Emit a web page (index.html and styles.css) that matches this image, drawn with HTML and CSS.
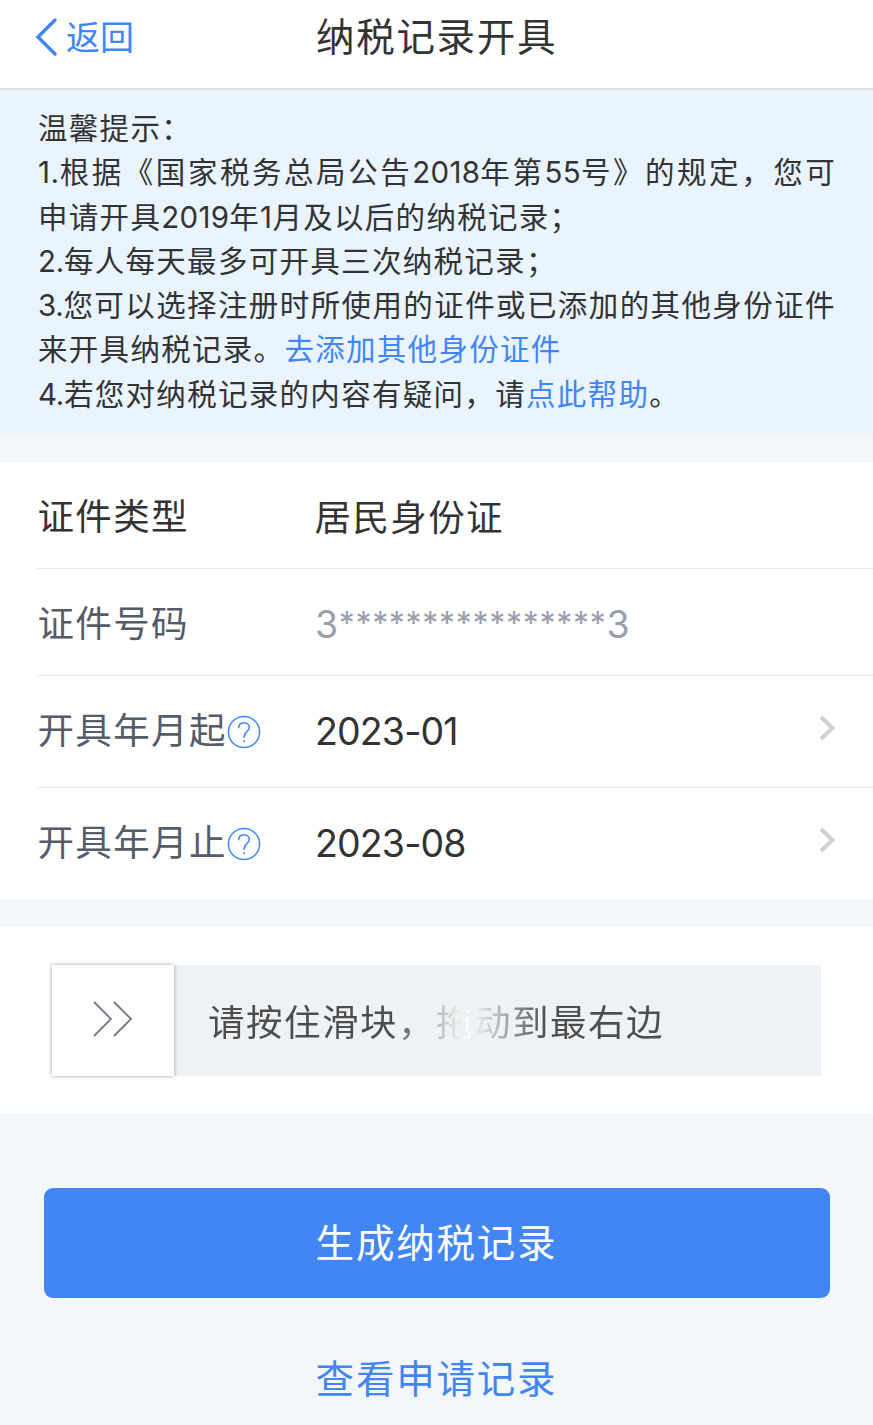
FILE: index.html
```html
<!DOCTYPE html>
<html lang="zh-CN">
<head>
<meta charset="utf-8">
<title>纳税记录开具</title>
<link rel="stylesheet" href="styles.css">
</head>
<body>
<header class="navbar">
  <a class="back"><svg class="back-icon" width="24" height="40" viewBox="0 0 24 40"><path d="M20 3L3 20L20 37" fill="none" stroke="currentColor" stroke-width="3.400" stroke-linecap="round" stroke-linejoin="miter"/></svg><span>返回</span></a>
  <h1 class="title">纳税记录开具</h1>
</header>
<section class="tips">
  <p class="tip">温馨提示：</p>
  <p class="tip tip-wide"><span class="index">1.</span>根据《国家税务总局公告<span class="num">2018</span>年第<span class="num">55</span>号》的规定，您可</p>
  <p class="tip">申请开具<span class="num">2019</span>年<span class="num">1</span>月及以后的纳税记录；</p>
  <p class="tip"><span class="index">2.</span>每人每天最多可开具三次纳税记录；</p>
  <p class="tip tip-full"><span class="index">3.</span>您可以选择注册时所使用的证件或已添加的其他身份证件</p>
  <p class="tip">来开具纳税记录。<a class="link">去添加其他身份证件</a></p>
  <p class="tip"><span class="index">4.</span>若您对纳税记录的内容有疑问，请<a class="link">点此帮助</a>。</p>
</section>
<section class="form">
  <div class="row"><span class="label dark">证件类型</span><span class="value">居民身份证</span></div>
  <div class="row"><span class="label">证件号码</span><span class="value masked">3<span class="stars">****************</span>3</span></div>
  <div class="row tall">
    <span class="label">开具年月起<svg class="help" width="34" height="34" viewBox="0 0 34 34"><circle cx="17" cy="17" r="15.600"/><path d="M11.600 13.200C11.600 9.800 13.700 7.700 17 7.700S22.300 9.900 22.300 12.600C22.300 16.400 17.200 17 17.200 21.500V22.700"/><path d="M17.200 25.200V27.200"/></svg></span>
    <span class="value date">2023-01</span>
    <svg class="chevron" width="18" height="28" viewBox="0 0 18 28"><path d="M3 3L14.500 14L3 25"/></svg>
  </div>
  <div class="row tall">
    <span class="label">开具年月止<svg class="help" width="34" height="34" viewBox="0 0 34 34"><circle cx="17" cy="17" r="15.600"/><path d="M11.600 13.200C11.600 9.800 13.700 7.700 17 7.700S22.300 9.900 22.300 12.600C22.300 16.400 17.200 17 17.200 21.500V22.700"/><path d="M17.200 25.200V27.200"/></svg></span>
    <span class="value date">2023-08</span>
    <svg class="chevron" width="18" height="28" viewBox="0 0 18 28"><path d="M3 3L14.500 14L3 25"/></svg>
  </div>
</section>
<section class="verify">
  <div class="slider">
    <div class="handle"><svg width="42" height="38" viewBox="0 0 42 38"><path d="M2 2L19 19L2 36M22 2L39 19L22 36" fill="none" stroke="#77788a" stroke-width="1.800"/></svg></div>
    <div class="slider-text">请按住滑块，拖动到最右边</div>
  </div>
</section>
<footer class="actions">
  <button class="primary">生成纳税记录</button>
  <a class="secondary">查看申请记录</a>
</footer>
</body>
</html>
```
FILE: styles.css
```css
* { box-sizing: border-box; }
body {
  margin: 0;
  width: 873px;
  height: 1425px;
  overflow: hidden;
  background: #f3f7fa;
  color: #333;
  font-family: Inter, "Noto Sans CJK SC", sans-serif;
  font-weight: 400;
}
.navbar {
  display: grid;
  grid-template-columns: 281px 1fr;
  height: 90px;
  padding: 0 0 15px 35px;
  align-items: center;
  background: #fff;
  border-bottom: 2px solid #e2e3e5;
}
.back { display: flex; align-items: center; gap: 7px; color: #4286f6; font-size: 34px; line-height: 40px; }
.back span { padding-top: 2px; }
.back-icon { display: block; }
.title { margin: 0; font-size: 38.500px; font-weight: 400; letter-spacing: 1.700px; line-height: 60px; }
.tips { height: 344px; padding: 16px 0 0 38px; background: #e9f4ff; }
.tip {
  margin: 0;
  height: 44.300px;
  line-height: 44.300px;
  font-size: 29.500px;
  letter-spacing: 1.300px;
  white-space: nowrap;
}
.tip-wide { letter-spacing: 2.550px; }
.tip-full { letter-spacing: 1.400px; }
.index { letter-spacing: -.300px; }
.tip-wide .index { letter-spacing: .600px; }
.num { letter-spacing: .300px; }
.link { color: #4286f6; }
.form { margin-top: 28px; background: #fff; }
.row {
  display: grid;
  grid-template-columns: 277px 1fr 18px;
  align-items: center;
  height: 107px;
  margin-left: 37px;
  padding-right: 37px;
  border-bottom: 1px solid #e6e6e9;
  font-size: 36.500px;
}
.row.tall { height: 112px; }
.row:last-child { height: 111px; border-bottom: 0; }
.label { display: flex; align-items: center; height: 54px; line-height: 54px; color: #565b69; letter-spacing: 1.350px; }
.tall .label { padding-bottom: 2px; }
.tall .help { margin-top: 2px; }
.label.dark { color: #333; }
.label, .value { padding-left: .500px; }
.row:not(.tall) .label { padding-top: 4px; }
.value { letter-spacing: 1.400px; }
.date { padding-left: 1px; font-size: 37.500px; letter-spacing: -.850px; }
.masked { padding: 4px 0 0 1px; color: #9a9fab; font-size: 37.500px; letter-spacing: .500px; }
.stars { font-size: 32px; letter-spacing: .700px; vertical-align: 3px; }
.help { fill: none; stroke: #4286f6; stroke-width: 1.500; }
.chevron { margin-bottom: 8px; fill: none; stroke: #d0d1d7; stroke-width: 4; }
.verify { height: 187px; margin-top: 28px; padding: 38px 52px; background: #fff; }
.slider { display: flex; height: 111px; background: #eef2f5; }
.handle {
  display: flex;
  align-items: center;
  justify-content: center;
  width: 122px;
  padding-bottom: 4px;
  background: #fff;
  box-shadow: 0 0 4px rgba(0, 0, 0, .4);
}
.slider-text {
  align-self: center;
  margin-left: 34px;
  font-size: 36.500px;
  letter-spacing: 1.500px;
  color: transparent;
  background: linear-gradient(90deg, #4d4d4d 0, #4d4d4d 40%, #fff 57%, #4d4d4d 74%);
  -webkit-background-clip: text;
  background-clip: text;
}
.actions { display: flex; flex-direction: column; align-items: center; padding-top: 74px; }
.primary {
  width: 786px;
  height: 110px;
  padding: 0;
  border: 0;
  border-radius: 9px;
  background: #4286f6;
  color: #fff;
  font: 400 38.500px/110px Inter, "Noto Sans CJK SC", sans-serif;
  letter-spacing: 1.800px;
}
.secondary { margin-top: 51px; color: #4286f6; font-size: 38.500px; line-height: 60px; letter-spacing: 1.800px; }
```
